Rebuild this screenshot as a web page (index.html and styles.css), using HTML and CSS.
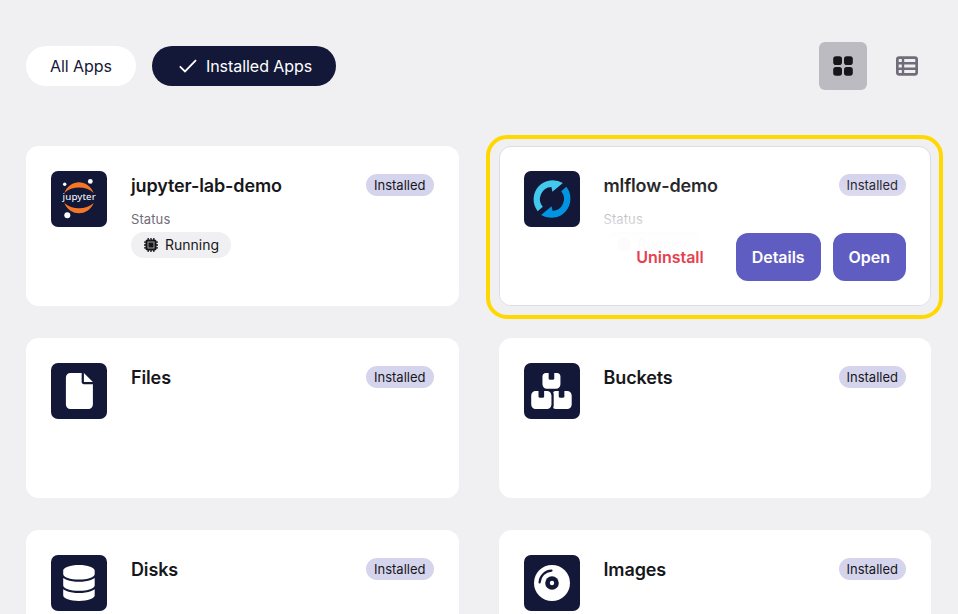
FILE: index.html
```html
<!DOCTYPE html>
<html lang="en">
<head>
<meta charset="utf-8">
<title>Installed Apps</title>
<link rel="stylesheet" href="styles.css">
</head>
<body>
<header class="toolbar">
  <nav class="filters">
    <button class="chip">All Apps</button>
    <button class="chip chip-active"><svg width="20" height="16" viewBox="0 0 20 16"><path d="M1.8 8.3 7 13.4 18 2.2" fill="none" stroke="#fff" stroke-width="1.8"/></svg><span>Installed Apps</span></button>
  </nav>
  <div class="views">
    <button class="view view-active" aria-label="Grid"><svg width="20" height="20" viewBox="0 0 20 20" fill="#17171b"><rect x=".2" y=".2" width="8.8" height="8.8" rx="2.8"/><rect x="11" y=".2" width="8.800" height="8.800" rx="2.800"/><rect x=".2" y="11" width="8.800" height="8.800" rx="2.800"/><rect x="11" y="11" width="8.800" height="8.800" rx="2.800"/></svg></button>
    <button class="view" aria-label="List"><svg width="22" height="20" viewBox="0 0 22 20" fill="none" stroke="#706d79" stroke-width="2.7"><rect x="1.35" y="1.65" width="19.3" height="16.7" rx="1.8"/><path d="M1.5 7.3h19M1.5 12.7h19M7 2v16" stroke-width="2.4"/></svg></button>
  </div>
</header>
<main class="grid">
  <article class="card">
    <svg class="logo" viewBox="0 0 56 56"><path d="M13.3 22C19 7.5 37 7.5 42.7 22 35 14.7 21 14.7 13.3 22ZM13.3 32C19 45.7 37 45.7 42.7 32 35 39 21 39 13.3 32Z" fill="#f37726"/><g fill="#fff"><circle cx="13.7" cy="13.3" r="1.7"/><circle cx="39.3" cy="10.4" r="2.4"/><circle cx="16.3" cy="44.2" r="3"/><text class="wordmark" x="11.6" y="29.2" textLength="33.2">jupyter</text></g></svg>
    <div class="info">
      <div class="head"><h2>jupyter-lab-demo</h2><span class="badge">Installed</span></div>
      <p class="label">Status</p>
      <span class="status"><svg width="14" height="14" viewBox="0 0 14 14"><path d="M4.2 0v14M7 0v14M9.8 0v14M0 4.2h14M0 7h14M0 9.8h14" stroke="#17171b" stroke-width="1.3"/><rect x="1.5" y="1.5" width="11" height="11" rx="1.8" fill="#17171b"/><rect x="4" y="4" width="6" height="6" fill="#17171b" stroke="#a0a0a3" stroke-width="1"/></svg><span class="state">Running</span></span>
    </div>
  </article>
  <article class="card card-hover">
    <svg class="logo" viewBox="0 0 56 56"><path d="M13.7 40.3A19.2 19.2 0 0 1 38.9 12.1L28.4 20.7 27.4 16.1A12 12 0 0 0 18.8 35.8Z" fill="#43c9ed"/><path d="M13.7 40.3A19.2 19.2 0 0 1 38.9 12.1L28.4 20.7 27.4 16.1A12 12 0 0 0 18.8 35.8Z" fill="#0194e2" transform="rotate(180 28 28)"/></svg>
    <div class="info">
      <div class="head"><h2>mlflow-demo</h2><span class="badge">Installed</span></div>
      <p class="label">Status</p>
      <span class="status"><svg width="14" height="14" viewBox="0 0 14 14"><path d="M4.2 0v14M7 0v14M9.8 0v14M0 4.2h14M0 7h14M0 9.8h14" stroke="#17171b" stroke-width="1.3"/><rect x="1.5" y="1.5" width="11" height="11" rx="1.8" fill="#17171b"/><rect x="4" y="4" width="6" height="6" fill="#17171b" stroke="#a0a0a3" stroke-width="1"/></svg><span class="state">Running</span></span>
    </div>
    <div class="actions"><button class="btn btn-text">Uninstall</button><button class="btn">Details</button><button class="btn">Open</button></div>
    <div class="highlight"></div>
  </article>
  <article class="card">
    <svg class="logo" viewBox="0 0 56 56"><path transform="translate(14.9 10) scale(.0703)" fill="#fff" d="M0 64C0 28.7 28.7 0 64 0H224V128c0 17.7 14.3 32 32 32H384V448c0 35.3-28.7 64-64 64H64c-35.3 0-64-28.7-64-64V64zm384 64H256V0L384 128z"/></svg>
    <div class="info"><div class="head"><h2>Files</h2><span class="badge">Installed</span></div></div>
  </article>
  <article class="card">
    <svg class="logo" viewBox="0 0 56 56"><path transform="translate(7.2 10) scale(.0703)" fill="#fff" d="M248 0H208c-26.5 0-48 21.5-48 48V160c0 35.3 28.7 64 64 64H352c35.3 0 64-28.7 64-64V48c0-26.5-21.5-48-48-48H328V80c0 8.8-7.2 16-16 16H264c-8.8 0-16-7.2-16-16V0zM64 256c-35.3 0-64 28.7-64 64V448c0 35.3 28.7 64 64 64H224c35.3 0 64-28.7 64-64V320c0-35.3-28.7-64-64-64H184v80c0 8.8-7.2 16-16 16H120c-8.8 0-16-7.2-16-16V256H64zM352 512H512c35.3 0 64-28.7 64-64V320c0-35.3-28.7-64-64-64H472v80c0 8.8-7.2 16-16 16H408c-8.8 0-16-7.2-16-16V256H352c-15 0-28.8 5.1-39.7 13.8c4.9 10.4 7.7 22 7.7 34.2V464c0 12.2-2.8 23.8-7.7 34.2C323.2 506.9 337 512 352 512z"/></svg>
    <div class="info"><div class="head"><h2>Buckets</h2><span class="badge">Installed</span></div></div>
  </article>
  <article class="card">
    <svg class="logo" viewBox="0 0 56 56"><path transform="translate(12.2 10) scale(.0703)" fill="#fff" d="M448 80v48c0 44.2-100.3 80-224 80S0 172.2 0 128V80C0 35.8 100.3 0 224 0S448 35.8 448 80zM393.2 214.7c20.8-7.4 39.9-16.9 54.8-28.6V288c0 44.2-100.3 80-224 80S0 332.2 0 288V186.1c14.9 11.8 34 21.2 54.8 28.6C99.7 230.7 159.5 240 224 240s124.3-9.3 169.2-25.3zM0 346.1c14.9 11.8 34 21.2 54.8 28.6C99.7 390.7 159.5 400 224 400s124.3-9.3 169.2-25.3c20.8-7.4 39.9-16.9 54.8-28.6V432c0 44.2-100.3 80-224 80S0 476.2 0 432V346.1z"/></svg>
    <div class="info"><div class="head"><h2>Disks</h2><span class="badge">Installed</span></div></div>
  </article>
  <article class="card">
    <svg class="logo" viewBox="0 0 56 56"><circle cx="28" cy="28" r="18" fill="#fff"/><circle cx="28" cy="28" r="6.8" fill="#131838"/><circle cx="28" cy="28" r="2.2" fill="#fff"/><path d="M15.6 27.5A12.4 12.4 0 0 1 27.5 15.6" fill="none" stroke="#131838" stroke-width="2.2" stroke-linecap="round"/></svg>
    <div class="info"><div class="head"><h2>Images</h2><span class="badge">Installed</span></div></div>
  </article>
</main>
</body>
</html>
```
FILE: styles.css
```css
* { box-sizing: border-box; }
html { height: 100%; overflow: hidden; }
body { margin: 0; height: 100vh; overflow: hidden; padding: 42px 27px 0 26px; background: #f0f0f2; color: #17171b; font-family: Inter, sans-serif; }
button { border: 0; font: inherit; color: inherit; background: none; }
h2, p { margin: 0; }
svg { display: block; flex: none; }
.toolbar { display: flex; justify-content: space-between; align-items: center; height: 48px; margin-bottom: 56px; }
.filters, .views { display: flex; gap: 16px; }
.chip { display: flex; align-items: center; gap: 8px; height: 40px; padding: 0 24px; border-radius: 20px; background: #fff; color: #131838; font-size: 16px; letter-spacing: -.05px; }
.chip-active { background: #131838; color: #fff; padding-left: 26px; }
.view { display: flex; align-items: center; justify-content: center; width: 48px; height: 48px; padding: 0; border-radius: 6px; }
.view-active { background: #bcbbc1; }
.grid { display: grid; grid-template-columns: 1fr 1fr; grid-auto-rows: 160px; gap: 32px 40px; }
.card { position: relative; display: flex; gap: 24px; padding: 24px; border: 1px solid #fff; border-radius: 12px; background: #fff; }
.card-hover { border-color: #dedee2; }
.logo { position: relative; z-index: 1; width: 56px; height: 56px; border-radius: 7px; background: #131838; }
.wordmark { font: 9.8px "Noto Sans", sans-serif; }
.info { flex: 1; min-width: 0; }
.head { display: flex; justify-content: space-between; align-items: center; height: 28px; }
h2 { padding-top: 1px; font-size: 18px; font-weight: 600; line-height: 28px; letter-spacing: -.13px; }
.badge { height: 22px; padding: 0 8px; border-radius: 11px; background: #d5d4ed; font-size: 13px; line-height: 22px; }
.label { margin-top: 10px; font-size: 13px; line-height: 20px; letter-spacing: .1px; color: #706d79; }
.status { display: inline-flex; align-items: center; gap: 7px; height: 26px; margin-top: 3px; padding: 0 12px 0 13px; border-radius: 13px; background: #f0f0f2; font-size: 14px; }
.state { padding-bottom: 1px; }
.actions { position: absolute; inset: 0; display: flex; justify-content: flex-end; align-items: flex-end; gap: 12px; padding: 24px; border-radius: 11px; background: linear-gradient(rgba(255,255,255,0) 19%, rgba(255,255,255,.14) 30%, rgba(255,255,255,.66) 46%, rgba(255,255,255,.98) 58%, rgba(255,255,255,.985) 64%, #fff 68%); }
.btn { height: 48px; padding: 0 16px; border-radius: 12px; background: #605dc2; color: #fff; font-size: 16px; font-weight: 600; letter-spacing: -.03px; }
.btn-text { margin-right: 4px; background: none; color: #e5404f; }
.highlight { position: absolute; inset: -12px -13px -14px -14px; border: 4px solid #ffd800; border-radius: 21px; }
```
